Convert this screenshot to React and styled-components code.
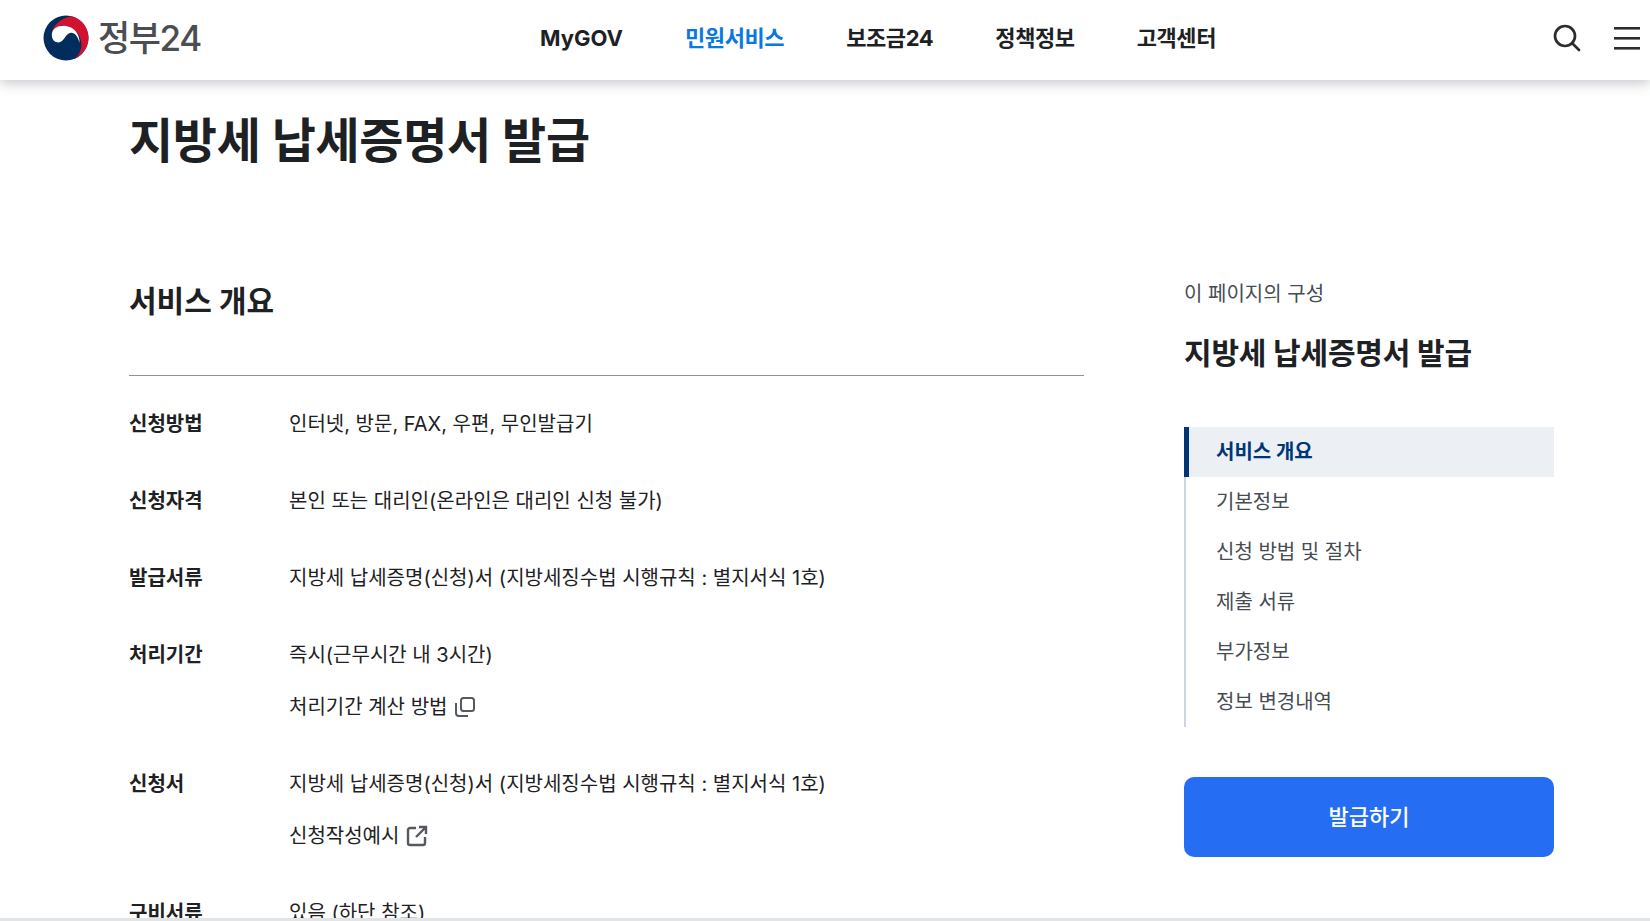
import React from "react"
import styled, { createGlobalStyle } from "styled-components"

const GlobalStyle = createGlobalStyle`
    html, body {
        margin: 0;
        padding: 0;
        background: #fff;
        font-family: Inter, "Noto Sans CJK KR", "Noto Sans", sans-serif;
        color: #1e2124;
    }
    * { box-sizing: border-box; }
`

const Page = styled.div`
    width: 1650px;
    height: 921px;
    overflow: hidden;
    display: flex;
    flex-direction: column;
    border-bottom: 3px solid #e3e4e6;
`

const Header = styled.header`
    flex: none;
    height: 80px;
    display: flex;
    align-items: center;
    padding: 0 0 4px 43px;
    background: #fff;
    box-shadow: 0 3px 12px rgba(60, 65, 80, 0.3);
    position: relative;
`

const LogoLink = styled.a`
    display: flex;
    align-items: center;
    gap: 9px;
    width: 497px;
`

const LogoText = styled.span`
    font-size: 35px;
    font-weight: 500;
    line-height: 1;
    letter-spacing: -1.4px;
    color: #4b4d50;
`

const Nav = styled.nav`
    display: flex;
    gap: 62px;
`

const NavItem = styled.a`
    font-size: 22px;
    font-weight: 700;
    line-height: 32px;
    letter-spacing: ${p => (p.$latin ? "0" : "-0.4px")};
    color: ${p => (p.$active ? "#0b78e0" : "#1e2124")};
`

const HeaderIcons = styled.div`
    margin-left: auto;
    display: flex;
    align-items: center;
    gap: 33px;
    padding-right: 10px;
`

const IconSvg = styled.svg`
    display: block;
    flex: none;
`

const Body = styled.main`
    flex: 1;
    min-height: 0;
    padding: 23px 0 0 129px;
`

const PageTitle = styled.h1`
    margin: 0;
    font-size: 48px;
    font-weight: 700;
    line-height: 76px;
    letter-spacing: -0.3px;
`

const Columns = styled.div`
    display: flex;
    gap: 100px;
    margin-top: 100px;
`

const Content = styled.section`
    width: 955px;
`

const SectionTitle = styled.h2`
    margin: 0;
    height: 97px;
    font-size: 30px;
    font-weight: 700;
    line-height: 44px;
    border-bottom: 1px solid #8a949e;
`

const InfoList = styled.dl`
    margin: 0;
    padding-top: 28px;
    display: flex;
    flex-direction: column;
    gap: 37px;
`

const InfoRow = styled.div`
    display: flex;
`

const InfoLabel = styled.dt`
    width: 160px;
    flex: none;
    font-size: 20px;
    font-weight: 700;
    line-height: 40px;
`

const InfoValues = styled.dd`
    margin: 0;
    display: flex;
    flex-direction: column;
    gap: 12px;
`

const InfoLine = styled.div`
    display: flex;
    align-items: center;
    gap: 7px;
    font-size: 20px;
    line-height: 40px;
`

const Aside = styled.aside`
    width: 370px;
    flex: none;
`

const AsideCaption = styled.div`
    font-size: 20px;
    line-height: 30px;
    color: #464c53;
`

const AsideTitle = styled.div`
    margin-top: 22px;
    font-size: 30px;
    font-weight: 700;
    line-height: 44px;
    letter-spacing: -0.2px;
`

const SideMenu = styled.ul`
    list-style: none;
    margin: 52px 0 0;
    padding: 0;
    border-left: 2px solid #cdd6e4;
`

const SideItem = styled.li`
    height: 50px;
    display: flex;
    align-items: center;
    padding: 0 0 3px 30px;
    font-size: 20px;
    font-weight: ${p => (p.$active ? 700 : 400)};
    color: ${p => (p.$active ? "#003675" : "#464c53")};
    background: ${p => (p.$active ? "#eceff4" : "transparent")};
    position: relative;

    &::before {
        content: "";
        display: ${p => (p.$active ? "block" : "none")};
        position: absolute;
        left: -2px;
        top: 0;
        bottom: 0;
        width: 5px;
        background: #003675;
    }
`

const IssueButton = styled.button`
    display: block;
    width: 100%;
    height: 80px;
    margin-top: 50px;
    padding: 0 0 5px;
    border: none;
    border-radius: 10px;
    background: #256ef4;
    color: #fff;
    font-family: inherit;
    font-size: 22px;
    font-weight: 500;
`

const NAV = [
    { label: "MyGOV", latin: true },
    { label: "민원서비스", active: true },
    { label: "보조금24" },
    { label: "정책정보" },
    { label: "고객센터" },
]

const MENU = ["서비스 개요", "기본정보", "신청 방법 및 절차", "제출 서류", "부가정보", "정보 변경내역"]

const FORM_NAME = "지방세 납세증명(신청)서 (지방세징수법 시행규칙 : 별지서식 1호)"

const Logo = () => (
    <IconSvg width="46" height="46" viewBox="0 0 46 46">
        <circle cx="23" cy="23" r="22.5" fill="#002d5c" />
        <path d="M8.5 19C9.5 10 19 2.5 29 1.3A22.5 22.5 0 0 1 31 44C37 40 40 32 37.5 24 35 15 24 9 17 11 13 12 9.5 15 8.5 19Z" fill="#d3122f" />
        <path d="M8.8 20C9 13 16 10 23 11 31 12 37 19 36.5 28 35 21 31 17 27 18 22 19.5 21 27 15.5 27.5 11.5 27.5 8.8 24.5 8.8 20Z" fill="#fff" />
    </IconSvg>
)

const SearchIcon = () => (
    <IconSvg width="28" height="28" viewBox="0 0 28 28" fill="none" stroke="#2b2d30" strokeWidth="2.7">
        <circle cx="12" cy="12" r="10" />
        <path d="M19.5 19.5L26 26" strokeLinecap="round" />
    </IconSvg>
)

const MenuIcon = () => (
    <IconSvg width="26" height="24" viewBox="0 0 26 24" fill="#2b2d30">
        <rect y="1" width="26" height="2.6" />
        <rect y="11" width="26" height="2.6" />
        <rect y="21" width="26" height="2.6" />
    </IconSvg>
)

const CopyIcon = () => (
    <IconSvg width="22" height="22" viewBox="0 0 22 22" fill="none" stroke="#555a60" strokeWidth="2">
        <rect x="7" y="2" width="13" height="13" rx="2.5" />
        <path d="M2 7v10a3 3 0 0 0 3 3h9" />
    </IconSvg>
)

const LinkIcon = () => (
    <IconSvg width="22" height="22" viewBox="0 0 22 22" fill="none" stroke="#555a60" strokeWidth="2.4">
        <path d="M10 3H4a2 2 0 0 0-2 2v13a2 2 0 0 0 2 2h13a2 2 0 0 0 2-2v-6" />
        <path d="M13 2h7v7M20 2L10 12" />
    </IconSvg>
)

const App = () => {
    return (
        <Page>
            <GlobalStyle />
            <Header>
                <LogoLink>
                    <Logo />
                    <LogoText>정부24</LogoText>
                </LogoLink>
                <Nav>
                    {NAV.map(item => (
                        <NavItem key={item.label} $active={item.active} $latin={item.latin}>{item.label}</NavItem>
                    ))}
                </Nav>
                <HeaderIcons>
                    <SearchIcon />
                    <MenuIcon />
                </HeaderIcons>
            </Header>
            <Body>
                <PageTitle>지방세 납세증명서 발급</PageTitle>
                <Columns>
                    <Content>
                        <SectionTitle>서비스 개요</SectionTitle>
                        <InfoList>
                            <InfoRow>
                                <InfoLabel>신청방법</InfoLabel>
                                <InfoValues><InfoLine>인터넷, 방문, FAX, 우편, 무인발급기</InfoLine></InfoValues>
                            </InfoRow>
                            <InfoRow>
                                <InfoLabel>신청자격</InfoLabel>
                                <InfoValues><InfoLine>본인 또는 대리인(온라인은 대리인 신청 불가)</InfoLine></InfoValues>
                            </InfoRow>
                            <InfoRow>
                                <InfoLabel>발급서류</InfoLabel>
                                <InfoValues><InfoLine>{FORM_NAME}</InfoLine></InfoValues>
                            </InfoRow>
                            <InfoRow>
                                <InfoLabel>처리기간</InfoLabel>
                                <InfoValues>
                                    <InfoLine>즉시(근무시간 내 3시간)</InfoLine>
                                    <InfoLine>처리기간 계산 방법 <CopyIcon /></InfoLine>
                                </InfoValues>
                            </InfoRow>
                            <InfoRow>
                                <InfoLabel>신청서</InfoLabel>
                                <InfoValues>
                                    <InfoLine>{FORM_NAME}</InfoLine>
                                    <InfoLine>신청작성예시 <LinkIcon /></InfoLine>
                                </InfoValues>
                            </InfoRow>
                            <InfoRow>
                                <InfoLabel>구비서류</InfoLabel>
                                <InfoValues><InfoLine>있음 (하단 참조)</InfoLine></InfoValues>
                            </InfoRow>
                        </InfoList>
                    </Content>
                    <Aside>
                        <AsideCaption>이 페이지의 구성</AsideCaption>
                        <AsideTitle>지방세 납세증명서 발급</AsideTitle>
                        <SideMenu>
                            {MENU.map((label, i) => (
                                <SideItem key={label} $active={i === 0}>{label}</SideItem>
                            ))}
                        </SideMenu>
                        <IssueButton>발급하기</IssueButton>
                    </Aside>
                </Columns>
            </Body>
        </Page>
    )
}

export default App
